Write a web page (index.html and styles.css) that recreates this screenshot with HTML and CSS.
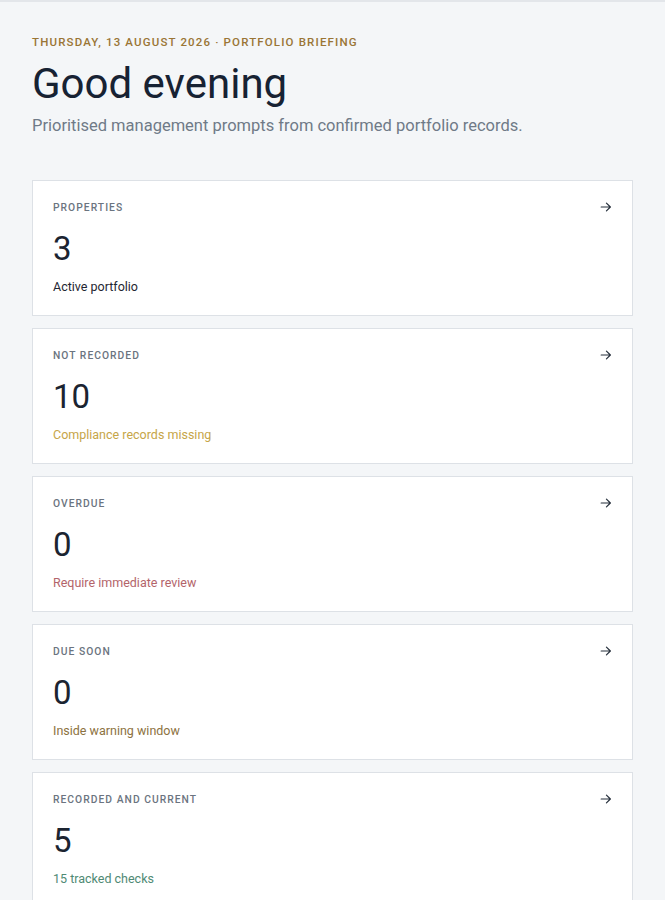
FILE: index.html
```html
<!DOCTYPE html>
<html lang="en">
<head>
    <meta charset="UTF-8">
    <meta name="viewport" content="width=device-width, initial-scale=1.0">
    <title>Portfolio Briefing</title>
    <link rel="stylesheet" href="styles.css">
</head>
<body>
    <main class="briefing">
        <header class="briefing-header">
            <p class="eyebrow">Thursday, 13 August 2026 · Portfolio briefing</p>
            <h1 class="greeting">Good evening</h1>
            <p class="lead">Prioritised management prompts from confirmed portfolio records.</p>
        </header>

        <section class="stat-list">
            <a class="stat-card" href="#">
                <div class="stat-top">
                    <span class="stat-label">Properties</span>
                    <svg class="arrow" viewBox="0 0 16 16"><path d="M2.5 8h10.5M8.5 3.5 13 8l-4.5 4.5"/></svg>
                </div>
                <div class="stat-value">3</div>
                <div class="stat-note">Active portfolio</div>
            </a>
            <a class="stat-card" href="#">
                <div class="stat-top">
                    <span class="stat-label">Not recorded</span>
                    <svg class="arrow" viewBox="0 0 16 16"><path d="M2.5 8h10.5M8.5 3.5 13 8l-4.5 4.5"/></svg>
                </div>
                <div class="stat-value">10</div>
                <div class="stat-note note-missing">Compliance records missing</div>
            </a>
            <a class="stat-card" href="#">
                <div class="stat-top">
                    <span class="stat-label">Overdue</span>
                    <svg class="arrow" viewBox="0 0 16 16"><path d="M2.5 8h10.5M8.5 3.5 13 8l-4.5 4.5"/></svg>
                </div>
                <div class="stat-value">0</div>
                <div class="stat-note note-overdue">Require immediate review</div>
            </a>
            <a class="stat-card" href="#">
                <div class="stat-top">
                    <span class="stat-label">Due soon</span>
                    <svg class="arrow" viewBox="0 0 16 16"><path d="M2.5 8h10.5M8.5 3.5 13 8l-4.5 4.5"/></svg>
                </div>
                <div class="stat-value">0</div>
                <div class="stat-note note-soon">Inside warning window</div>
            </a>
            <a class="stat-card" href="#">
                <div class="stat-top">
                    <span class="stat-label">Recorded and current</span>
                    <svg class="arrow" viewBox="0 0 16 16"><path d="M2.5 8h10.5M8.5 3.5 13 8l-4.5 4.5"/></svg>
                </div>
                <div class="stat-value">5</div>
                <div class="stat-note note-current">15 tracked checks</div>
            </a>
        </section>
    </main>
</body>
</html>
```

FILE: styles.css
```css
body {
    font-family: Roboto, "Noto Sans", sans-serif;
    -webkit-font-smoothing: antialiased;
    margin: 0;
    padding: 0;
    background: #f4f6f8;
    color: #17212f;
}
.briefing {
    border-top: 2px solid #e3e6ea;
    padding: 33px 32px 40px;
}
.briefing-header {
    margin-bottom: 44px;
}
.eyebrow {
    margin: 0;
    font-size: 11.5px;
    font-weight: 500;
    letter-spacing: 0.1em;
    text-transform: uppercase;
    color: #9a7535;
    line-height: 14px;
}
.greeting {
    margin: 10px 0 0;
    font-size: 42px;
    font-weight: 400;
    line-height: 50px;
    color: #172233;
}
.lead {
    margin: 6px 0 0;
    font-size: 16.5px;
    line-height: 21px;
    color: #6f7a87;
}
.stat-list {
    display: flex;
    flex-direction: column;
    gap: 12px;
}
.stat-card {
    display: block;
    background: #ffffff;
    border: 1px solid #dde1e6;
    padding: 19px 20px 19px;
    text-decoration: none;
    color: inherit;
    height: 136px;
    box-sizing: border-box;
}
.stat-top {
    display: flex;
    justify-content: space-between;
    align-items: center;
    height: 14px;
}
.stat-label {
    font-size: 10.3px;
    font-weight: 500;
    letter-spacing: 0.1em;
    text-transform: uppercase;
    color: #6b7480;
}
.arrow {
    width: 14px;
    height: 14px;
    fill: none;
    stroke: #27313d;
    stroke-width: 1.4;
    stroke-linecap: round;
    stroke-linejoin: round;
    margin-right: -1px;
}
.stat-value {
    margin-top: 17px;
    font-size: 33px;
    line-height: 36px;
    color: #1b2431;
}
.stat-note {
    margin-top: 12px;
    font-size: 12.5px;
    line-height: 16px;
    color: #1f2733;
}
.note-missing {
    color: #c6a548;
}
.note-overdue {
    color: #b3646a;
}
.note-soon {
    color: #8c7241;
}
.note-current {
    color: #4f8a74;
}
```
